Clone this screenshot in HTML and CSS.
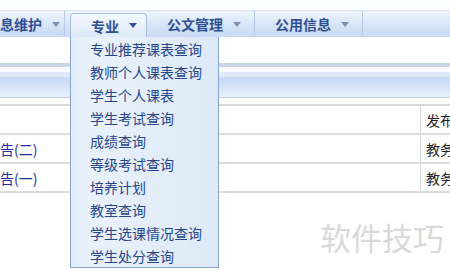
FILE: index.html
```html
<!DOCTYPE html>
<html lang="zh-CN">

<head>
    <meta charset="UTF-8">
    <meta name="viewport" content="width=device-width, initial-scale=1.0">
    <title>教务系统</title>
    <link rel="stylesheet" href="styles.css">
</head>

<body>
    <div class="page">
        <div class="top-strip"></div>
        <!-- 主菜单 -->
        <div class="menubar">
            <div class="menu-item first">信息维护<span class="arrow"></span></div>
            <div class="menu-item active">专业<span class="arrow"></span></div>
            <div class="menu-item">公文管理<span class="arrow"></span></div>
            <div class="menu-item">公用信息<span class="arrow"></span></div>
        </div>
        <div class="blank"></div>
        <div class="band"></div>
        <div class="thead"></div>
        <div class="notice-list">
            <div class="row">
                <div class="cell title"></div>
                <div class="cell dept">发布单位</div>
            </div>
            <div class="row">
                <div class="cell title"><a href="#">公告(二)</a></div>
                <div class="cell dept">教务处</div>
            </div>
            <div class="row">
                <div class="cell title"><a href="#">公告(一)</a></div>
                <div class="cell dept">教务处</div>
            </div>
        </div>

        <!-- 下拉菜单 -->
        <ul class="dropdown">
            <li>专业推荐课表查询</li>
            <li>教师个人课表查询</li>
            <li>学生个人课表</li>
            <li>学生考试查询</li>
            <li>成绩查询</li>
            <li>等级考试查询</li>
            <li>培养计划</li>
            <li>教室查询</li>
            <li>学生选课情况查询</li>
            <li>学生处分查询</li>
        </ul>

        <div class="watermark">软件技巧</div>
    </div>
</body>

</html>
```

FILE: styles.css
```css
* {
    margin: 0;
    padding: 0;
    box-sizing: border-box;
}

body {
    font-family: "Noto Sans CJK SC", "Liberation Sans", sans-serif;
    background-color: #fff;
    overflow: hidden;
}

.page {
    position: relative;
    width: 450px;
    height: 270px;
    overflow: hidden;
}

.top-strip {
    height: 10px;
    background-color: #fdfeff;
}

.menubar {
    height: 27px;
    display: flex;
    align-items: flex-end;
    background: linear-gradient(#eef4fc, #d4e3f6 60%, #c8daf2);
    border-top: 1px solid #d9e5f4;
}

.menu-item {
    height: 26px;
    display: flex;
    align-items: center;
    padding: 0 13px 0 20px;
    font-size: 14px;
    font-weight: bold;
    color: #2f4f93;
    white-space: nowrap;
    border-right: 1px solid #b4c9e6;
}

.menu-item.first {
    margin-left: -34px;
    padding-right: 4px;
    margin-right: 5px;
}

.menu-item.active {
    height: 24px;
    width: 77px;
    background: linear-gradient(#f4f8fd, #dde9f8);
    border: 1px solid #a5bde0;
    border-bottom: none;
    border-radius: 4px 4px 0 0;
}

.arrow {
    width: 0;
    height: 0;
    margin-left: 10px;
    border-left: 4px solid transparent;
    border-right: 4px solid transparent;
    border-top: 5px solid #7b8fb3;
}

.menu-item.active .arrow {
    border-top-color: #2f4f93;
}

.blank {
    height: 26px;
}

.band {
    height: 14px;
    border-top: 4px solid #c9d6e8;
    background: linear-gradient(#fafcff 0, #fafcff 5px, #dfe9f7 5px, #dfe9f7 100%);
}

.thead {
    height: 21px;
    background: linear-gradient(#c4d8f5, #dae6f8 60%, #e8f0fb);
    border-bottom: 1px solid #c4d2e4;
}

.notice-list {
    margin-top: 6px;
    border-top: 2px solid #d8d8d8;
}

.row {
    display: flex;
    height: 29px;
    border-bottom: 2px solid #dcdcdc;
}

.cell {
    display: flex;
    align-items: center;
    font-size: 14px;
    white-space: nowrap;
    overflow: hidden;
}

.cell.title {
    width: 420px;
}

.cell.title a {
    margin-left: -14px;
    color: #1e2ea0;
    text-decoration: none;
}

.cell.dept {
    flex: 1;
    padding-left: 5px;
    color: #222;
    border-left: 1px solid #d4d4d4;
}

.dropdown {
    position: absolute;
    top: 37px;
    left: 70px;
    width: 149px;
    height: 231px;
    list-style: none;
    background: linear-gradient(90deg, #e3edf9 0, #e9f1fb 18px, #dde9f7 100%);
    border: 1px solid #86a6d0;
    border-top: none;
    padding-top: 1px;
}

.dropdown li {
    height: 23px;
    line-height: 23px;
    padding-left: 19px;
    font-size: 14px;
    color: #25468c;
    white-space: nowrap;
}

.watermark {
    position: absolute;
    left: 320px;
    top: 214px;
    font-size: 31px;
    color: #d9d9d9;
}
```
